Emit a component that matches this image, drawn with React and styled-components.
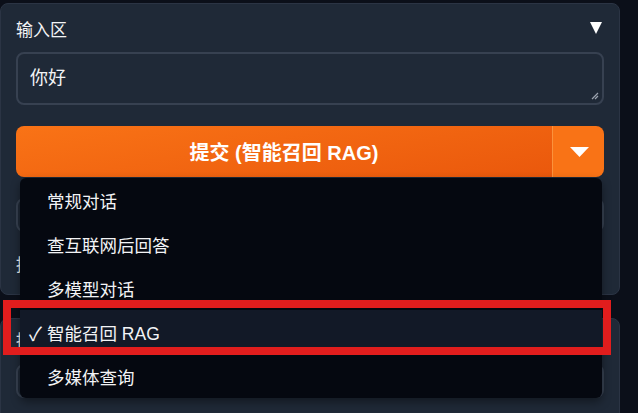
import styled, { createGlobalStyle } from "styled-components";

const GlobalStyle = createGlobalStyle`
  html, body {
    margin: 0;
    padding: 0;
    background: #0b0f19;
    font-family: "Liberation Sans", "Noto Sans CJK SC", sans-serif;
    color: #f3f4f6;
    overflow: hidden;
  }
`;

const MENU_ITEMS = ["常规对话", "查互联网后回答", "多模型对话", "智能召回 RAG", "多媒体查询"];
const SELECTED = "智能召回 RAG";

export default function App() {
  return (
    <Page>
      <GlobalStyle />
      <Panel>
        <PanelHeader>
          <Label>输入区</Label>
          <svg width="12" height="12" viewBox="0 0 12 12">
            <path d="M0 0 H12 L6 12 Z" fill="#fff" />
          </svg>
        </PanelHeader>

        <TextArea>
          你好
          <Grip width="8" height="8" viewBox="0 0 8 8">
            <path d="M7 1 L1 7 M7 4 L4 7" stroke="#9ca3af" strokeWidth="1.2" />
          </Grip>
        </TextArea>

        <SplitWrap>
          <SplitButton>
            <MainAction>提交 (智能召回 RAG)</MainAction>
            <CaretAction>
              <svg width="19" height="10" viewBox="0 0 19 10">
                <path d="M0 0 H19 L9.5 10 Z" fill="#fff" />
              </svg>
            </CaretAction>
          </SplitButton>

          <Menu>
            {MENU_ITEMS.map((item) => (
              <MenuItem key={item} $active={item === SELECTED}>
                {item === SELECTED && <Check>✓</Check>}
                {item}
              </MenuItem>
            ))}
          </Menu>
        </SplitWrap>

        <Field />
        <SubLabel>提示词</SubLabel>
      </Panel>

      <Panel $last>
        <SubLabel $first>提示词</SubLabel>
        <Field $tight />
      </Panel>

      <Highlight />
    </Page>
  );
}

const Page = styled.div`
  position: relative;
  width: 620px;
  height: 413px;
  overflow: hidden;
  padding-top: 3px;
  box-sizing: border-box;
  display: flex;
  flex-direction: column;
  gap: 23px;
`;

const Panel = styled.section`
  background: #1f2937;
  border: 1px solid #2b3444;
  border-radius: 8px;
  padding: ${(p) => (p.$last ? "13px" : "12px")} 15px 0 15px;
  display: flex;
  flex-direction: column;
  height: ${(p) => (p.$last ? "120px" : "292px")};
  box-sizing: border-box;
  flex-shrink: 0;
`;

const PanelHeader = styled.div`
  height: 24px;
  display: flex;
  align-items: center;
  justify-content: space-between;
  padding-right: 2px;
`;

const Label = styled.span`
  font-size: 17px;
  color: #f3f4f6;
`;

const TextArea = styled.div`
  position: relative;
  margin-top: 12px;
  height: 53px;
  box-sizing: border-box;
  border: 2px solid #374151;
  border-radius: 8px;
  padding: 12px 12px;
  font-size: 18px;
  color: #f3f4f6;
  line-height: 24px;
`;

const Grip = styled.svg`
  position: absolute;
  right: 3px;
  bottom: 3px;
`;

const SplitWrap = styled.div`
  position: relative;
  margin-top: 21px;
`;

const SplitButton = styled.div`
  display: flex;
  height: 51px;
  border-radius: 8px;
  overflow: hidden;
`;

const MainAction = styled.button`
  flex: 1;
  border: none;
  background: linear-gradient(170deg, #f97316 0%, #ea580c 100%);
  color: #fff;
  font-family: "Liberation Sans", "Noto Sans CJK SC", sans-serif;
  font-weight: 700;
  font-size: 20px;
  border-right: 1px solid #fb923c;
  padding: 0;
`;

const CaretAction = styled.button`
  width: 51px;
  border: none;
  background: #f97316;
  display: flex;
  align-items: center;
  justify-content: center;
  padding: 0 0 0 2px;
`;

const Menu = styled.ul`
  position: absolute;
  top: 52px;
  left: 4px;
  width: 582px;
  margin: 0;
  padding: 0;
  list-style: none;
  background: #050810;
  border-radius: 6px;
  box-shadow: 0 4px 10px rgba(0, 0, 0, 0.4);
  z-index: 5;
  overflow: hidden;
`;

const MenuItem = styled.li`
  position: relative;
  height: 44px;
  display: flex;
  align-items: center;
  padding-left: 27px;
  font-size: 17.5px;
  color: #f3f4f6;
  background: ${(p) => (p.$active ? "#121927" : "transparent")};
`;

const Check = styled.span`
  position: absolute;
  left: 9px;
  font-size: 19px;
`;

const Field = styled.div`
  margin-top: ${(p) => (p.$tight ? "12px" : "21px")};
  height: 34px;
  border: 2px solid #374151;
  border-radius: 8px;
  box-sizing: border-box;
  flex-shrink: 0;
`;

const SubLabel = styled.div`
  margin-top: ${(p) => (p.$first ? "0" : "24px")};
  font-size: 17px;
  line-height: 20px;
  color: #f3f4f6;
`;

const Highlight = styled.div`
  position: absolute;
  left: 3px;
  top: 300px;
  width: 608px;
  height: 55px;
  box-sizing: border-box;
  border: 8px solid #e11d1d;
  z-index: 10;
  pointer-events: none;
`;
